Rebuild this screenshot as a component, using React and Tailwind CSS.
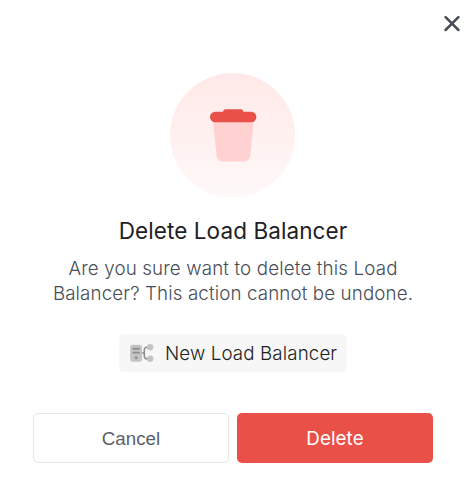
function CloseIcon() {
  return (
    <svg width="16" height="16" viewBox="0 0 16 16" fill="none" stroke="#474d57" strokeWidth="2.5" strokeLinecap="round">
      <path d="M1.6 1.2L14.4 14M14.4 1.2L1.6 14" />
    </svg>
  );
}

function TrashIcon() {
  return (
    <svg width="48" height="54" viewBox="0 0 48 54">
      <path d="M3.8 11H45L41.2 47.6A6.5 6.5 0 0 1 34.7 53.6H14A6.5 6.5 0 0 1 7.5 47.6Z" fill="#ffd1d0" />
      <path
        d="M6.2 3.8H14.1C14.3 2.2 15 1.2 16.4 1.2H32C33.4 1.2 34.1 2.2 34.3 3.8H42.2A5.2 5.2 0 0 1 42.2 14.2H6.2A5.2 5.2 0 0 1 6.2 3.8Z"
        fill="#e95048"
      />
    </svg>
  );
}

function LoadBalancerIcon() {
  return (
    <svg width="24" height="18" viewBox="0 0 24 18">
      <rect x="0.2" y="0.8" width="11.8" height="17" rx="2.4" fill="#c4c4c4" />
      <path d="M3.4 4.7H9M3.4 8.6H9" stroke="#8e8e8e" strokeWidth="1.9" strokeLinecap="round" />
      <circle cx="6.2" cy="13.8" r="1.5" fill="#8e8e8e" />
      <path d="M12 9H14.3M18 3.2H17.4C15.2 3.2 14.3 4.4 14.3 6V12C14.3 13.8 15.4 15 17.4 15H18" stroke="#8e8e8e" strokeWidth="1.6" fill="none" />
      <circle cx="20.2" cy="3.2" r="3.2" fill="#c4c4c4" />
      <circle cx="20.2" cy="14.7" r="3.2" fill="#c4c4c4" />
    </svg>
  );
}

export default function App() {
  return (
    <div className="relative flex h-[482px] w-[470px] flex-col bg-white pr-[4px] font-['Inter',sans-serif]">
      <button aria-label="Close" className="absolute top-[16px] right-[10px]">
        <CloseIcon />
      </button>
      <div className="mt-[73px] mr-[1px] flex size-[125px] items-center justify-center self-center rounded-full bg-linear-to-b from-[#ffe9e8] to-[#fff9f9] pb-[2px] pl-[1px]">
        <TrashIcon />
      </div>
      <h1 className="mt-[18px] text-center text-[22.5px] leading-[30px] tracking-[0.09px] text-[#1e2026]">Delete Load Balancer</h1>
      <p className="mt-[10px] text-center text-[18.75px] leading-[25px] font-light text-[#474d57]">
        <span className="tracking-[0.15px]">Are you sure want to delete this Load</span>
        <br />
        <span className="tracking-[0.12px]">Balancer? This action cannot be undone.</span>
      </p>
      <div className="mt-[28px] flex h-[38px] w-[228px] items-center gap-[11px] self-center rounded-[5px] bg-[#f7f7f7] pl-[11px]">
        <LoadBalancerIcon />
        <span className="pt-[2px] text-[18.75px] font-light tracking-[0.11px] whitespace-nowrap text-[#1e1e1e]">New Load Balancer</span>
      </div>
      <div className="mt-[41px] flex h-[50px] gap-2 px-[33px] text-[18.75px]">
        <button className="w-[196px] rounded-[5px] border border-[#e6e6e8] pt-[2px] font-['Liberation_Sans',sans-serif] text-[#5a5f69]">Cancel</button>
        <button className="w-[196px] rounded-[5px] bg-[#e95048] pt-[2px] tracking-[0.1px] text-white">Delete</button>
      </div>
    </div>
  );
}
